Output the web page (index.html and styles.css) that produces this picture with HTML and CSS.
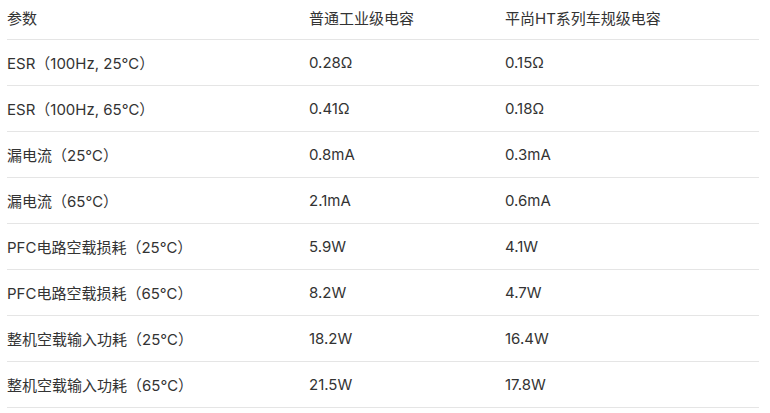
FILE: index.html
```html
<!DOCTYPE html>
<html lang="zh">
<head>
<meta charset="utf-8">
<link rel="stylesheet" href="styles.css">
</head>
<body>
<table class="spec">
  <thead>
    <tr><th class="c1">参数</th><th class="c2">普通工业级电容</th><th class="c3">平尚HT系列车规级电容</th></tr>
  </thead>
  <tbody>
    <tr><td>ESR（100Hz, 25℃）</td><td>0.28Ω</td><td>0.15Ω</td></tr>
    <tr><td>ESR（100Hz, 65℃）</td><td>0.41Ω</td><td>0.18Ω</td></tr>
    <tr><td>漏电流（25℃）</td><td>0.8mA</td><td>0.3mA</td></tr>
    <tr><td>漏电流（65℃）</td><td>2.1mA</td><td>0.6mA</td></tr>
    <tr><td>PFC电路空载损耗（25℃）</td><td>5.9W</td><td>4.1W</td></tr>
    <tr><td>PFC电路空载损耗（65℃）</td><td>8.2W</td><td>4.7W</td></tr>
    <tr><td>整机空载输入功耗（25℃）</td><td>18.2W</td><td>16.4W</td></tr>
    <tr><td>整机空载输入功耗（65℃）</td><td>21.5W</td><td>17.8W</td></tr>
  </tbody>
</table>
</body>
</html>
```
FILE: styles.css
```css
html, body {
  margin: 0;
  padding: 0;
  background: #ffffff;
}
body {
  padding-left: 7px;
  font-family: "Inter", "Noto Sans CJK SC", sans-serif;
  font-size: 15px;
  color: #333333;
}
.spec {
  width: 752px;
  border-collapse: collapse;
  table-layout: fixed;
}
.spec th, .spec td {
  padding: 0;
  text-align: left;
  font-weight: 400;
  border-bottom: 1px solid #e5e5e5;
  vertical-align: middle;
  white-space: nowrap;
}
.spec th {
  height: 39px;
  padding-bottom: 4px;
  box-sizing: border-box;
}
.spec td {
  height: 45px;
  box-sizing: content-box;
}
.c1 { width: 302px; }
.c2 { width: 196px; }
.c3 { width: 254px; }
```
